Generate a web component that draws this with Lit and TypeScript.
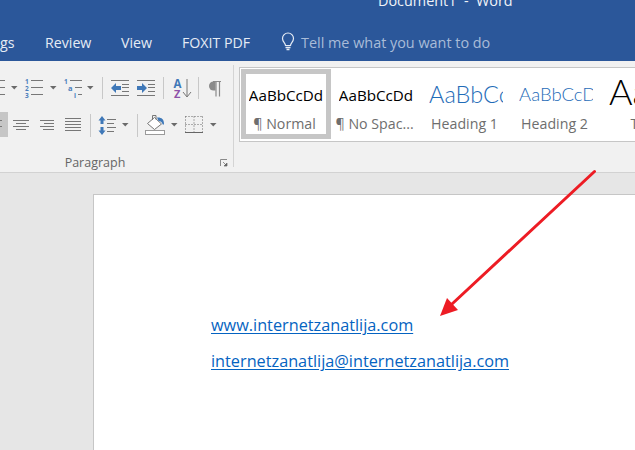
import { LitElement, html, css, svg } from "lit";
import { customElement } from "lit/decorators.js";

const G = "#777777";
const B = "#4a7ebb";
const ln = (x1: number, x2: number, y: number, c = G) =>
  svg`<rect x=${x1} y=${y} width=${x2 - x1} height="1" fill=${c}></rect>`;
const caret = (x: number, y: number) =>
  svg`<path d="M${x} ${y}h6.5l-3.25 3.5z" fill="#6a6a6a"></path>`;
const t = (x: number, y: number, s: string, size: number, fill: string, weight = 700) =>
  svg`<text x=${x} y=${y} font-size=${size} font-weight=${weight} fill=${fill} font-family="Open Sans, sans-serif">${s}</text>`;

type Seg = { x: number; w: number; c?: unknown };

const row1: Seg[] = [
  { x: 0, w: 20, c: svg`${ln(0, 5, 80)}${ln(0, 5, 87)}${ln(0, 5, 94)}${caret(11, 86)}` },
  { x: 20, w: 40, c: svg`${t(25, 84, "1", 6.5, B)}${t(25, 91, "2", 6.5, B)}${t(25, 98, "3", 6.5, B)}${ln(31, 43, 80)}${ln(31, 43, 87)}${ln(31, 43, 94)}${caret(50, 86)}` },
  { x: 60, w: 38, c: svg`${t(64, 84, "1", 6.5, B)}${t(68, 91, "a", 7.5, B)}${t(74, 98, "i", 6.5, B)}${ln(70, 82, 80)}${ln(75, 82, 87)}${ln(78, 82, 94)}${caret(87, 86)}` },
  { x: 98, w: 8, c: svg`<rect x="102" y="77" width="1" height="22" fill="#c8c8c8"></rect>` },
  { x: 106, w: 27, c: svg`${ln(111, 129, 80)}${ln(122, 129, 84)}${ln(122, 129, 87)}${ln(122, 129, 91)}${ln(111, 129, 95)}<path d="M111 88l5-5v3h5v4h-5v3z" fill="#3f78b8"></path>` },
  { x: 133, w: 26, c: svg`${ln(137, 155, 80)}${ln(148, 155, 84)}${ln(148, 155, 87)}${ln(148, 155, 91)}${ln(137, 155, 95)}<path d="M147 88l-5-5v3h-5v4h5v3z" fill="#3f78b8"></path>` },
  { x: 159, w: 8, c: svg`<rect x="163" y="77" width="1" height="22" fill="#c8c8c8"></rect>` },
  { x: 167, w: 27, c: svg`${t(173.5, 87.5, "A", 11.5, "#3f78b8")}${t(174, 97.5, "Z", 11, "#8e52a8")}<path d="M187 79v17M183 92l4 5 4-5" stroke="#777" fill="none" stroke-width="1"></path>` },
  { x: 194, w: 8, c: svg`<rect x="198" y="77" width="1" height="22" fill="#c8c8c8"></rect>` },
  { x: 202, w: 31, c: svg`<path d="M215.500 81.500h-2a4.500 4.500 0 0 0 0 9h2z" fill="#8a8a8a"></path><path d="M213 81.500h8M216 81.500v15M219.500 81.500v15" stroke="#8a8a8a" stroke-width="1.200" fill="none"></path>` },
];

const row2: Seg[] = [
  { x: 0, w: 8, c: svg`<rect x="0" y="112" width="8" height="25" fill="#c6c6c6"></rect>${ln(0, 2, 120)}${ln(0, 2, 126)}` },
  { x: 8, w: 25, c: svg`${ln(13, 29, 120)}${ln(16, 26, 123)}${ln(13, 29, 126)}${ln(16, 26, 129)}` },
  { x: 33, w: 26, c: svg`${ln(40, 54, 120)}${ln(44, 54, 123)}${ln(40, 54, 126)}${ln(43, 54, 129)}` },
  { x: 59, w: 27, c: svg`${ln(65, 81, 118)}${ln(65, 81, 121)}${ln(65, 81, 124)}${ln(65, 81, 127)}${ln(65, 81, 130)}` },
  { x: 86, w: 8, c: svg`<rect x="90" y="114" width="1" height="23" fill="#c8c8c8"></rect>` },
  { x: 94, w: 39, c: svg`<path d="M102 116l3.500 4.500h-2v3.500h-3v-3.500h-2zM102 135l3.500-4.500h-2v-3.500h-3v3.500h-2z" fill="#3f78b8"></path>${ln(107, 116, 119)}${ln(107, 114, 123)}${ln(107, 116, 127)}${ln(107, 114, 131)}${caret(122, 123)}` },
  { x: 133, w: 8, c: svg`<rect x="137" y="114" width="1" height="23" fill="#c8c8c8"></rect>` },
  { x: 141, w: 40, c: svg`<path d="M147.500 123.500l7-6 7 6.500-7 5.500z" fill="#fff" stroke="#777"></path><path d="M152.500 120v-4.500h3.500v4" fill="none" stroke="#777"></path><path d="M157 117.500c4-.5 7 1.500 7 6 0 1-1 2-1.500 .5-.5-2-2-3-4-3z" fill="#3f78b8"></path><rect x="145.500" y="130.500" width="19" height="4" fill="#fff" stroke="#9a9a9a"></rect>${caret(171, 123)}` },
  { x: 181, w: 52, c: svg`<path d="M185.500 116.500h17M185.500 124.500h17M194 116.500v16M185.500 116.500v16M202.500 116.500v16" stroke="#666" stroke-dasharray="1 2" fill="none"></path><rect x="185" y="132" width="18" height="1" fill="#666"></rect>${caret(210, 123)}` },
];

const seg = (s: Seg, y: number, h: number) =>
  html`<svg width=${s.w} height=${h} viewBox="${s.x} ${y} ${s.w} ${h}">${s.c}</svg>`;

const styles = [
  { label: "¶ Normal", cls: "normal", sel: true },
  { label: "¶ No Spac...", cls: "normal", sel: false },
  { label: "Heading 1", cls: "h1", sample: "AaBbCcDd", sel: false },
  { label: "Heading 2", cls: "h2", sample: "AaBbCcDd", sel: false },
  { label: "Title", cls: "title", sample: "AaB", sel: false },
];

@customElement("app-root")
export class AppRoot extends LitElement {
  static styles = css`
    :host {
      display: block;
      width: 635px;
      height: 450px;
      position: relative;
      overflow: hidden;
      background: #e6e6e6;
      font-family: "Open Sans", sans-serif;
    }
    .titlebar {
      height: 61px;
      background: #2b579a;
      overflow: hidden;
      color: #fff;
    }
    .doc-title {
      margin: -9px 0 0 378px;
      height: 20px;
      line-height: 20px;
      font-size: 14.4px;
      white-space: pre;
      color: #f0f3f8;
    }
    .tabs {
      display: flex;
      align-items: center;
      height: 24px;
      margin-top: 19px;
      font-size: 14.2px;
      color: #e6ecf5;
      white-space: nowrap;
    }
    .tab-g { width: 45px; }
    .tab-r { width: 76px; }
    .tab-v { width: 61px; }
    .tab-f { width: 96px; }
    .bulb { width: 20px; height: 20px; }
    .tell { color: #a9bcd8; margin-left: 3px; font-size: 14.4px; }
    .ribbon {
      height: 111px;
      background: #f1f1f1;
      border-bottom: 1px solid #d2d2d2;
      display: flex;
      overflow: hidden;
    }
    .para {
      box-sizing: border-box;
      width: 234px;
      margin-top: 4px;
      height: 102px;
      flex: none;
      border-right: 1px solid #d4d4d4;
      display: flex;
      flex-direction: column;
      padding-top: 9px;
    }
    .tools { display: flex; height: 27px; flex: none; }
    .tools svg { display: block; flex: none; }
    .row2 { margin-top: 10px; }
    .para-foot {
      display: flex;
      align-items: center;
      height: 10px;
      flex: none;
      margin-top: 20px;
    }
    .para-label {
      width: 220px;
      text-align: center;
      font-size: 12.5px;
      line-height: 16px;
      color: #666;
      margin-left: -15px;
    }
    .launcher { flex: none; width: 8px; height: 8px; margin-left: 15px; }
    .gallery {
      margin: 6px 0 0 5px;
      height: 75px;
      box-sizing: border-box;
      border: 1px solid #c6c6c6;
      border-right: none;
      background: #fff;
      display: flex;
      padding: 1px 0 2px 1px;
      flex: none;
      width: 420px;
    }
    .style {
      box-sizing: border-box;
      width: 90px;
      height: 70px;
      flex: none;
      padding: 5px 7px;
      display: flex;
      flex-direction: column;
      align-items: center;
      overflow: hidden;
    }
    .style.sel { border: 5px solid #c6c6c6; padding: 0 2px; }
    .sample {
      box-sizing: border-box;
      height: 41px;
      width: 74px;
      overflow: hidden;
      white-space: nowrap;
      display: flex;
      align-items: center;
      flex: none;
    }
    .normal .sample { font-size: 15.2px; color: #000; justify-content: center; width: 75px; }
    .h1 .sample { font-family: Lato, sans-serif; font-weight: 300; font-size: 23.5px; color: #1f6cb8; padding-bottom: 2px; }
    .h2 .sample { font-family: Lato, sans-serif; font-weight: 300; font-size: 18.5px; color: #1f6cb8; padding-bottom: 2px; }
    .title .sample { font-family: Lato, sans-serif; font-weight: 300; font-size: 36px; color: #000; padding-bottom: 7px; }
    .label {
      font-size: 14.2px;
      line-height: 18px;
      color: #6e6e6e;
      white-space: nowrap;
      margin-right: 3px;
    }
    .workspace {
      height: 277px;
      padding: 21px 0 0 93px;
      box-sizing: border-box;
      overflow: hidden;
    }
    .page {
      height: 300px;
      background: #fff;
      border: 1px solid #c6c6c6;
      border-width: 1px 0 0 1px;
      padding: 120px 0 0 117px;
      box-sizing: border-box;
    }
    .page a {
      display: block;
      width: max-content;
      font-size: 16.25px;
      line-height: 20px;
      color: #0563c1;
      text-decoration: underline;
      text-underline-offset: 2px;
    }
    .page a + a { margin-top: 16px; }
    .arrow { position: absolute; left: 0; top: 0; pointer-events: none; }
  `;

  render() {
    return html`
      <div class="titlebar">
        <div class="doc-title">Document1  -  Word</div>
        <div class="tabs">
          <span class="tab-g">gs</span>
          <span class="tab-r">Review</span>
          <span class="tab-v">View</span>
          <span class="tab-f">FOXIT PDF</span>
          <svg class="bulb" viewBox="0 0 20 20" fill="none" stroke="#e6ecf5" stroke-width="1.2">
            <path d="M7.500 13.500c0-2.500-3-3.500-3-7a5.500 5.500 0 0 1 11 0c0 3.500-3 4.500-3 7z"></path>
            <path d="M7.500 15.500h5M8.500 17.500h3" stroke-width="1.500"></path>
          </svg>
          <span class="tell">Tell me what you want to do</span>
        </div>
      </div>
      <div class="ribbon">
        <div class="para">
          <div class="tools">${row1.map((s) => seg(s, 74, 27))}</div>
          <div class="tools row2">${row2.map((s) => seg(s, 111, 27))}</div>
          <div class="para-foot">
            <span class="para-label">Paragraph</span>
            <svg class="launcher" viewBox="0 0 8 8">
              <path d="M.5 7V.5H7" fill="none" stroke="#8a8a8a"></path>
              <path d="M3 3l4 4M7 4v3H4z" fill="#666" stroke="#666" stroke-width=".7"></path>
            </svg>
          </div>
        </div>
        <div class="gallery">
          ${styles.map(
            (s) => html`<div class="style ${s.cls} ${s.sel ? "sel" : ""}">
              <div class="sample">${s.sample ?? "AaBbCcDd"}</div>
              <div class="label">${s.label}</div>
            </div>`
          )}
        </div>
      </div>
      <div class="workspace">
        <div class="page">
          <a>www.internetzanatlija.com</a>
          <a>internetzanatlija@internetzanatlija.com</a>
        </div>
      </div>
      <svg class="arrow" width="635" height="450" viewBox="0 0 635 450">
        <path d="M594.500 171.500L452 304" stroke="#ed1c24" stroke-width="3" stroke-linecap="round" fill="none"></path>
        <path d="M440 316L447 298L458 310z" fill="#ed1c24"></path>
      </svg>
    `;
  }
}
